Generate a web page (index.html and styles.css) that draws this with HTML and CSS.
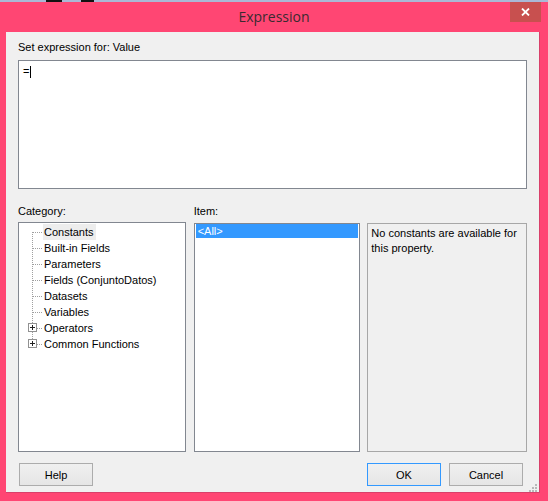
FILE: index.html
```html
<!DOCTYPE html>
<html>
<head>
<meta charset="utf-8">
<link rel="stylesheet" href="styles.css">
</head>
<body>
<div class="screen-strip">
  <span class="bit bit-a"></span>
  <span class="bit bit-b"></span>
</div>
<div class="window">
  <div class="titlebar">
    <div class="title-spacer"></div>
    <div class="title">Expression</div>
    <div class="close">
      <svg width="9" height="8" viewBox="0 0 9 8"><path d="M1 0.5 L8 7.5 M8 0.5 L1 7.5" stroke="#fff" stroke-width="1.8" fill="none"/></svg>
    </div>
  </div>
  <div class="content">
    <div class="expr-label">Set expression for: Value</div>
    <div class="expr-box"><span class="expr-text">=</span><span class="caret"></span></div>

    <div class="lower">
      <div class="col col-cat">
        <div class="col-label">Category:</div>
        <div class="panel list-panel">
          <div class="tree">
            <div class="row">
              <svg class="gutter" width="24" height="16"><path d="M13.5 8 V16 M14 8.5 H23" stroke="#a0a0a0" stroke-dasharray="1 1" fill="none" shape-rendering="crispEdges"/></svg>
              <span class="node node-sel">Constants</span>
            </div>
            <div class="row">
              <svg class="gutter" width="24" height="16"><path d="M13.5 0 V16 M14 8.5 H23" stroke="#a0a0a0" stroke-dasharray="1 1" fill="none" shape-rendering="crispEdges"/></svg>
              <span class="node">Built-in Fields</span>
            </div>
            <div class="row">
              <svg class="gutter" width="24" height="16"><path d="M13.5 0 V16 M14 8.5 H23" stroke="#a0a0a0" stroke-dasharray="1 1" fill="none" shape-rendering="crispEdges"/></svg>
              <span class="node">Parameters</span>
            </div>
            <div class="row">
              <svg class="gutter" width="24" height="16"><path d="M13.5 0 V16 M14 8.5 H23" stroke="#a0a0a0" stroke-dasharray="1 1" fill="none" shape-rendering="crispEdges"/></svg>
              <span class="node">Fields (ConjuntoDatos)</span>
            </div>
            <div class="row">
              <svg class="gutter" width="24" height="16"><path d="M13.5 0 V16 M14 8.5 H23" stroke="#a0a0a0" stroke-dasharray="1 1" fill="none" shape-rendering="crispEdges"/></svg>
              <span class="node">Datasets</span>
            </div>
            <div class="row">
              <svg class="gutter" width="24" height="16"><path d="M13.5 0 V16 M14 8.5 H23" stroke="#a0a0a0" stroke-dasharray="1 1" fill="none" shape-rendering="crispEdges"/></svg>
              <span class="node">Variables</span>
            </div>
            <div class="row">
              <svg class="gutter" width="24" height="16"><path d="M13.5 0 V3 M13.5 12 V16 M18 8.5 H23" stroke="#a0a0a0" stroke-dasharray="1 1" fill="none" shape-rendering="crispEdges"/><rect x="9.5" y="3.5" width="8" height="8" fill="#fff" stroke="#919191" shape-rendering="crispEdges"/><path d="M11 7.5 H16 M13.5 5 V10" stroke="#222" fill="none" shape-rendering="crispEdges"/></svg>
              <span class="node">Operators</span>
            </div>
            <div class="row">
              <svg class="gutter" width="24" height="16"><path d="M13.5 0 V3 M18 8.5 H23" stroke="#a0a0a0" stroke-dasharray="1 1" fill="none" shape-rendering="crispEdges"/><rect x="9.5" y="3.5" width="8" height="8" fill="#fff" stroke="#919191" shape-rendering="crispEdges"/><path d="M11 7.5 H16 M13.5 5 V10" stroke="#222" fill="none" shape-rendering="crispEdges"/></svg>
              <span class="node">Common Functions</span>
            </div>
          </div>
        </div>
      </div>
      <div class="col col-item">
        <div class="col-label">Item:</div>
        <div class="panel list-panel item-panel">
          <div class="item item-sel">&lt;All&gt;</div>
        </div>
      </div>
      <div class="col col-desc">
        <div class="col-label">&nbsp;</div>
        <div class="panel desc-panel">No constants are available for this property.</div>
      </div>
    </div>

    <div class="buttons">
      <button class="btn btn-help">Help</button>
      <div class="btn-spacer"></div>
      <button class="btn btn-ok">OK</button>
      <button class="btn btn-cancel">Cancel</button>
      <div class="grip">
        <svg width="8" height="8" viewBox="0 0 8 8" shape-rendering="crispEdges">
          <rect x="6" y="0" width="2" height="2" fill="#b8b8b8"/>
          <rect x="3" y="3" width="2" height="2" fill="#b8b8b8"/>
          <rect x="6" y="3" width="2" height="2" fill="#b8b8b8"/>
          <rect x="0" y="6" width="2" height="2" fill="#b8b8b8"/>
          <rect x="3" y="6" width="2" height="2" fill="#b8b8b8"/>
          <rect x="6" y="6" width="2" height="2" fill="#b8b8b8"/>
        </svg>
      </div>
    </div>
  </div>
</div>
</body>
</html>
```

FILE: styles.css
```css
* { box-sizing: border-box; }
html, body {
  margin: 0;
  padding: 0;
  width: 548px;
  height: 501px;
  overflow: hidden;
  background: #ff4673;
}
body {
  font-family: "Liberation Sans", Arial, sans-serif;
  font-size: 11px;
  color: #000;
}
.screen-strip {
  height: 2px;
  background: #aab8d6;
  display: flex;
}
.bit { display: block; height: 2px; background: #111; }
.bit-a { width: 16px; margin-left: 46px; }
.bit-b { width: 13px; margin-left: 19px; }

.window {
  background: #ff4673;
  padding: 0 8px 8px 6px;
  height: 499px;
}
.titlebar {
  height: 30px;
  display: flex;
  margin: 0 -8px 0 -6px;
}
.title-spacer { width: 38px; }
.title {
  flex: 1;
  text-align: center;
  font-family: "Open Sans", "Noto Sans", sans-serif;
  font-size: 14px;
  line-height: 30px;
  color: #3a2a30;
}
.close {
  width: 31px;
  height: 20px;
  margin-right: 7px;
  background: #c8504f;
  display: flex;
  align-items: center;
  justify-content: center;
}
.close svg { display: block; }

.content {
  background: #f0f0f0;
  height: 461px;
  padding: 0 12px;
  border-right: 1px solid #d9406a;
  border-bottom: 1px solid #d9406a;
  display: flex;
  flex-direction: column;
}
.content > * { flex: none; }
.expr-label {
  height: 28px;
  padding-top: 9px;
  line-height: 13px;
}
.expr-box {
  height: 129px;
  background: #fff;
  border: 1px solid #828790;
  padding: 4px 0 0 4px;
  display: flex;
  align-items: flex-start;
}
.expr-text { line-height: 13px; }
.caret {
  display: block;
  width: 1px;
  height: 12px;
  background: #000;
  margin-left: 1px;
  margin-top: 1px;
}
.lower {
  display: flex;
  margin-top: 16px;
}
.col { display: flex; flex-direction: column; }
.col-cat { width: 168px; }
.col-item { width: 167px; margin-left: 8px; }
.col-desc { width: 160px; margin-left: 7px; }
.col-label {
  height: 17px;
  line-height: 13px;
}
.panel {
  height: 230px;
  border: 1px solid #828790;
  background: #fff;
}
.item-panel, .desc-panel { margin-top: 1px; height: 229px; }
.tree { padding-top: 1px; }
.row {
  display: flex;
  height: 16px;
  align-items: center;
}
.gutter { display: block; flex: none; }
.node {
  line-height: 16px;
  padding: 0 2px 0 1px;
}
.node-sel { background: #ededed; }
.item-panel { padding: 0 1px; }
.item {
  height: 14px;
  line-height: 14px;
  padding-left: 2px;
}
.item-sel { background: #3399ff; color: #fff; }
.desc-panel {
  background: #f0f0f0;
  border-color: #a7a7a7;
  padding: 2px 3px;
  line-height: 15px;
}
.buttons {
  display: flex;
  align-items: flex-start;
  margin-top: 11px;
  padding: 0 0 0 1px;
  height: 29px;
}
.btn {
  width: 74px;
  height: 23px;
  font-family: "Liberation Sans", Arial, sans-serif;
  font-size: 11px;
  color: #000;
  background: linear-gradient(#f0f0f0, #e5e5e5);
  border: 1px solid #acacac;
  padding: 0;
  margin: 0;
  flex: none;
}
.btn-spacer { flex: 1; }
.btn-ok { border-color: #3399ff; }
.btn-cancel { margin-left: 8px; }
.grip {
  flex: none;
  margin: 21px -10px 0 6px;
}
.grip svg { display: block; }
```
